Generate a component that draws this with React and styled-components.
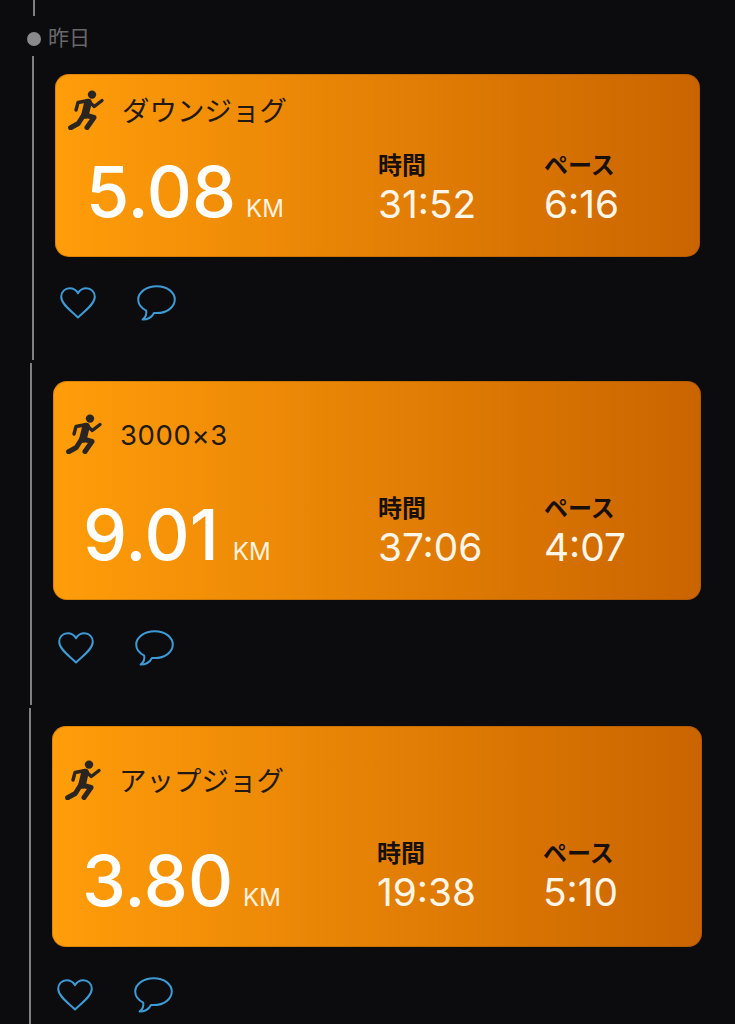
import styled, { createGlobalStyle } from "styled-components";

const GlobalStyle = createGlobalStyle`
  html, body {
    margin: 0;
    padding: 0;
    background: #0c0c0e;
  }
`;

const Page = styled.div`
  width: 735px;
  height: 1024px;
  overflow: hidden;
  background: #0c0c0e;
  font-family: Inter, "Noto Sans CJK JP", sans-serif;
`;

const TopStub = styled.div`
  width: 2px;
  height: 16px;
  margin-left: 33px;
  background: #808083;
`;

const DayRow = styled.div`
  display: flex;
  align-items: center;
  gap: 7px;
  box-sizing: border-box;
  height: 40px;
  padding-top: 4px;
  margin-left: 27px;
`;

const Dot = styled.span`
  width: 14px;
  height: 14px;
  margin-top: 2px;
  border-radius: 50%;
  background: #8a8a8c;
`;

const DayText = styled.span`
  margin-bottom: 4px;
  font-family: "Noto Sans CJK JP", sans-serif;
  font-size: 21px;
  line-height: 26px;
  color: #68686b;
`;

const Entry = styled.section`
  height: ${(p) => p.$height}px;
  margin-top: ${(p) => p.$top}px;
  margin-left: ${(p) => p.$left}px;
  padding-top: 18px;
  padding-left: 21px;
  box-sizing: border-box;
  border-left: 2px solid #808083;
`;

const Card = styled.div`
  display: flex;
  flex-direction: column;
  justify-content: space-between;
  box-sizing: border-box;
  width: ${(p) => p.$width}px;
  height: ${(p) => p.$height}px;
  padding: ${(p) => p.$padTop}px 0 ${(p) => p.$padBottom}px 13px;
  border-radius: 14px;
  background: linear-gradient(90deg, #ff9d0a 0%, #ca6400 100%);
  box-shadow: inset 0 0 0 1px rgba(120, 60, 0, 0.25);
`;

const Header = styled.div`
  display: flex;
  align-items: flex-start;
  gap: 16px;
`;

const Title = styled.span`
  padding-top: 1px;
  font-family: Inter, "Noto Sans CJK JP", sans-serif;
  font-size: 27.5px;
  font-weight: 400;
  line-height: 40px;
  letter-spacing: ${(p) => p.$spacing}px;
  color: #221a10;
`;

const Body = styled.div`
  display: grid;
  grid-template-columns: ${(p) => p.$distance}px 166px 1fr;
  align-items: end;
`;

const Distance = styled.div`
  display: flex;
  align-items: baseline;
  gap: ${(p) => p.$gap}px;
  margin-bottom: ${(p) => p.$lift}px;
  padding-left: ${(p) => p.$indent}px;
`;

const Value = styled.span`
  font-size: 70px;
  font-weight: 500;
  line-height: 70px;
  color: #fff;
`;

const Unit = styled.span`
  font-size: 24px;
  font-weight: 400;
  line-height: 24px;
  color: #fff3e0;
`;

const Stat = styled.div`
  display: flex;
  flex-direction: column;
`;

const StatLabel = styled.span`
  font-family: "Noto Sans CJK JP", sans-serif;
  font-size: 24px;
  font-weight: 700;
  line-height: 37px;
  color: #17100a;
`;

const StatValue = styled.span`
  font-size: 38.8px;
  font-weight: 400;
  line-height: 44px;
  color: #fff6ea;
`;

const Actions = styled.div`
  display: flex;
  align-items: center;
  gap: 41px;
  margin-top: ${(p) => p.$top}px;
  margin-left: 5px;
`;

function Runner() {
  return (
    <svg width="38" height="40" viewBox="0 0 38 40" fill="none" stroke="#2a2520" strokeLinecap="round" strokeLinejoin="round">
      <circle cx="24" cy="4.6" r="4.2" fill="#2a2520" stroke="none" />
      <path d="M20 12.5 L17 25" strokeWidth="7.5" />
      <path d="M20.3 11 L26.3 16.5 L34 10.5" strokeWidth="3.4" />
      <path d="M18 11 L10 12.5 L8 20" strokeWidth="3.4" />
      <path d="M15 26 L10.3 33.5 L2.6 37.8" strokeWidth="5" />
      <path d="M17 25 L26 27.5 L19 37.5" strokeWidth="5" />
    </svg>
  );
}

function Heart() {
  return (
    <svg width="36" height="32" viewBox="0 0 36 32" fill="none" stroke="#3d9ad4" strokeWidth="2" strokeLinejoin="round">
      <path d="M18 30.5 C12 24.5 1.2 17.5 1.2 9.8 C1.2 4.8 5 1.2 9.6 1.2 C13 1.2 16.2 3 18 6.2 C19.8 3 23 1.2 26.4 1.2 C31 1.2 34.8 4.8 34.8 9.8 C34.8 17.5 24 24.5 18 30.5 Z" />
    </svg>
  );
}

function Bubble() {
  return (
    <svg width="39" height="36" viewBox="0 0 39 36" fill="none" stroke="#3d9ad4" strokeWidth="2" strokeLinejoin="round">
      <path d="M19.8 1.2 C9.5 1.2 1.2 7.3 1.2 14.6 C1.2 19.2 4.4 23.2 9.2 25.6 C9.8 28.6 8.6 32.2 5.6 34.6 C10.4 34.6 15 31.8 17 28 C18 28.1 18.9 28.1 19.8 28.1 C30 28.1 37.8 22 37.8 14.6 C37.8 7.3 30 1.2 19.8 1.2 Z" />
    </svg>
  );
}

const entries = [
  {
    title: "ダウンジョグ", km: "5.08", time: "31:52", pace: "6:16", spacing: 0,
    left: 32, top: 0, height: 304, card: 645, cardHeight: 183, actionsTop: 28,
    padTop: 16, padBottom: 31, lift: -1, distance: 310, indent: 18, gap: 10,
  },
  {
    title: "3000×3", km: "9.01", time: "37:06", pace: "4:07", spacing: 0.6,
    left: 30, top: 3, height: 342, card: 648, cardHeight: 219, actionsTop: 30,
    padTop: 33, padBottom: 31, lift: -1, distance: 312, indent: 17, gap: 14,
  },
  {
    title: "アップジョグ", km: "3.80", time: "19:38", pace: "5:10", spacing: 0,
    left: 29, top: 3, height: 316, card: 650, cardHeight: 221, actionsTop: 30,
    padTop: 34, padBottom: 33, lift: -2, distance: 312, indent: 17, gap: 10,
  },
];

export default function App() {
  return (
    <Page>
      <GlobalStyle />
      <TopStub />
      <DayRow>
        <Dot />
        <DayText>昨日</DayText>
      </DayRow>
      {entries.map((e) => (
        <Entry key={e.title} $left={e.left} $top={e.top} $height={e.height}>
          <Card $width={e.card} $height={e.cardHeight} $padTop={e.padTop} $padBottom={e.padBottom}>
            <Header>
              <Runner />
              <Title $spacing={e.spacing}>{e.title}</Title>
            </Header>
            <Body $distance={e.distance}>
              <Distance $indent={e.indent} $gap={e.gap} $lift={e.lift}>
                <Value>{e.km}</Value>
                <Unit>KM</Unit>
              </Distance>
              <Stat>
                <StatLabel>時間</StatLabel>
                <StatValue>{e.time}</StatValue>
              </Stat>
              <Stat>
                <StatLabel>ペース</StatLabel>
                <StatValue>{e.pace}</StatValue>
              </Stat>
            </Body>
          </Card>
          <Actions $top={e.actionsTop}>
            <Heart />
            <Bubble />
          </Actions>
        </Entry>
      ))}
    </Page>
  );
}
